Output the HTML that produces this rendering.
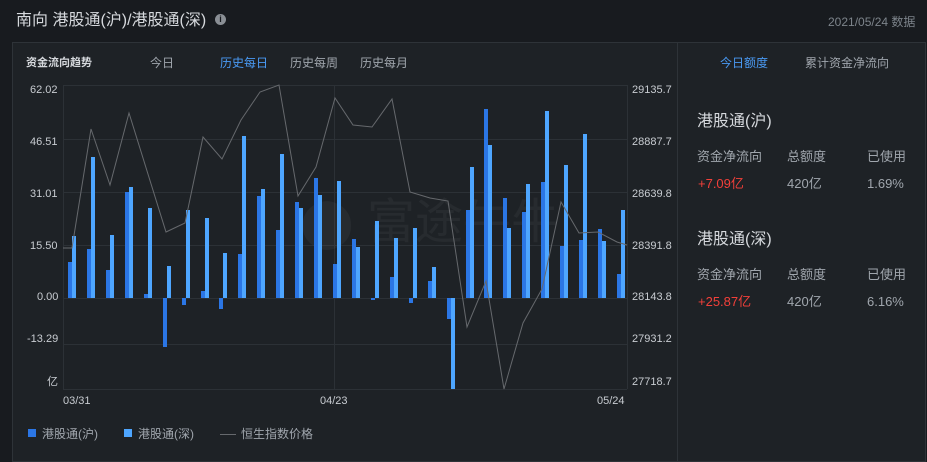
<!DOCTYPE html>
<html><head><meta charset="utf-8"><style>
*{margin:0;padding:0;box-sizing:border-box}
body{width:927px;height:457px;background:#181b1f;font-family:"Liberation Sans","Noto Sans CJK SC",sans-serif;position:relative;overflow:hidden;color:#c8ccd1}
.a{position:absolute;white-space:nowrap;line-height:16px}
.panel{position:absolute;left:12px;top:42px;width:914px;height:420px;background:#1e2226;border:1px solid #2e3338}
.div{position:absolute;left:677px;top:42px;width:1px;height:420px;background:#2e3338}
.ax{font-size:11px;color:#c8ccd1}
.r{font-size:13px;color:#a0a6ad}
</style></head><body>
<div class="a" style="left:16px;top:12px;font-size:16px;line-height:18px;color:#d6d9dd">南向 港股通(沪)/港股通(深)</div>
<div class="a" style="left:215px;top:14px;width:11px;height:11px;border-radius:50%;background:#8a8f95;color:#181b1f;font-size:9px;font-weight:bold;text-align:center;line-height:11px">i</div>
<div class="a" style="left:828px;top:14px;font-size:12px;color:#7d848b">2021/05/24 数据</div>
<div class="panel"></div>
<div class="div"></div>
<div class="a" style="left:26px;top:55px;font-size:11px;font-weight:bold;color:#d6d9dd">资金流向趋势</div>
<div class="a" style="left:150px;top:55px;font-size:12px;color:#a0a6ad">今日</div>
<div class="a" style="left:220px;top:55px;font-size:12px;color:#4a9bf5">历史每日</div>
<div class="a" style="left:290px;top:55px;font-size:12px;color:#a0a6ad">历史每周</div>
<div class="a" style="left:360px;top:55px;font-size:12px;color:#a0a6ad">历史每月</div>

<div class="a ax" style="left:30px;top:82px">62.02</div>
<div class="a ax" style="left:30px;top:134px">46.51</div>
<div class="a ax" style="left:30px;top:186px">31.01</div>
<div class="a ax" style="left:30px;top:238px">15.50</div>
<div class="a ax" style="left:37px;top:289px">0.00</div>
<div class="a ax" style="left:27px;top:331px">-13.29</div>
<div class="a ax" style="left:47px;top:374px">亿</div>
<div class="a ax" style="left:632px;top:82px">29135.7</div>
<div class="a ax" style="left:632px;top:134px">28887.7</div>
<div class="a ax" style="left:632px;top:186px">28639.8</div>
<div class="a ax" style="left:632px;top:238px">28391.8</div>
<div class="a ax" style="left:632px;top:289px">28143.8</div>
<div class="a ax" style="left:632px;top:331px">27931.2</div>
<div class="a ax" style="left:632px;top:374px">27718.7</div>
<div class="a ax" style="left:63px;top:393px">03/31</div>
<div class="a ax" style="left:320px;top:393px">04/23</div>
<div class="a ax" style="left:597px;top:393px">05/24</div>

<svg class="a" style="left:0;top:0" width="927" height="457">
<g stroke="#2c3136" stroke-width="1">
<line x1="63" y1="85.5" x2="627" y2="85.5"/><line x1="63" y1="139.5" x2="627" y2="139.5"/><line x1="63" y1="192.5" x2="627" y2="192.5"/><line x1="63" y1="245.5" x2="627" y2="245.5"/><line x1="63" y1="298.5" x2="627" y2="298.5"/><line x1="63" y1="344.5" x2="627" y2="344.5"/><line x1="63" y1="389.5" x2="627" y2="389.5"/>
<line x1="63.5" y1="85" x2="63.5" y2="389"/><line x1="334.5" y1="85" x2="334.5" y2="389"/><line x1="627.5" y1="85" x2="627.5" y2="389"/>
</g>
<text x="300" y="238" font-family="Liberation Sans,Noto Sans CJK SC,sans-serif" font-size="48" fill="#ffffff" fill-opacity="0.045">⬤ 富途牛牛</text>
<g id="bars"></g>
<polyline fill="none" stroke="#66696d" stroke-width="1" points="63,248 72,248 91,129 110,185 129,113 166,232 185,223 203,137 222,159 241,120 260,92 279,85 298,196 316,167 335,98 353,125 372,127 392,99 410,192 430,198 448,201 467,327 486,281 504,389 523,323 542,289 561,202 579,233 598,232 617,242 627,245"/>
</svg>

<div class="a" style="left:28px;top:429px;width:8px;height:8px;background:#2b76e5"></div>
<div class="a" style="left:42px;top:426px;font-size:12px;color:#a0a6ad">港股通(沪)</div>
<div class="a" style="left:124px;top:429px;width:8px;height:8px;background:#4ea6ff"></div>
<div class="a" style="left:138px;top:426px;font-size:12px;color:#a0a6ad">港股通(深)</div>
<div class="a" style="left:220px;top:434px;width:16px;height:1px;background:#66696d"></div>
<div class="a" style="left:241px;top:426px;font-size:12px;color:#a0a6ad">恒生指数价格</div>

<div class="a" style="left:720px;top:55px;font-size:12px;color:#4a9bf5">今日额度</div>
<div class="a" style="left:805px;top:55px;font-size:12px;color:#a0a6ad">累计资金净流向</div>
<div class="a" style="left:697px;top:113px;font-size:16px;line-height:18px;color:#d6d9dd">港股通(沪)</div>
<div class="a r" style="left:697px;top:149px">资金净流向</div>
<div class="a r" style="left:787px;top:149px">总额度</div>
<div class="a r" style="left:867px;top:149px">已使用</div>
<div class="a" style="left:698px;top:176px;font-size:13px;color:#f2403a">+7.09亿</div>
<div class="a r" style="left:787px;top:176px">420亿</div>
<div class="a r" style="left:867px;top:176px">1.69%</div>
<div class="a" style="left:697px;top:231px;font-size:16px;line-height:18px;color:#d6d9dd">港股通(深)</div>
<div class="a r" style="left:697px;top:267px">资金净流向</div>
<div class="a r" style="left:787px;top:267px">总额度</div>
<div class="a r" style="left:867px;top:267px">已使用</div>
<div class="a" style="left:698px;top:294px;font-size:13px;color:#f2403a">+25.87亿</div>
<div class="a r" style="left:787px;top:294px">420亿</div>
<div class="a r" style="left:867px;top:294px">6.16%</div>

<script>
var d=[[262,236],[249,157],[270,235],[192,187],[294,208],[347,266],[305,210],[291,218],[309,253],[254,136],[196,189],[230,154],[202,208],[178,195],[264,181],[239,247],[300,221],[277,238],[303,228],[281,267],[319,389],[210,167],[109,145],[198,228],[212,184],[182,111],[246,165],[240,134],[229,241],[274,210]];
var s='';
function r(x,v,c){var y=Math.min(v,298),h=Math.abs(v-298);if(h<1)h=1;return '<rect x="'+x+'" y="'+y+'" width="4" height="'+h+'" fill="'+c+'"/>';}
for(var i=0;i<d.length;i++){var x=Math.round(68+i*18.93);
s+=r(x,d[i][0],'#2b76e5')+r(x+4,d[i][1],'#4ea6ff');}
document.getElementById('bars').innerHTML=s;
</script>
</body></html>
